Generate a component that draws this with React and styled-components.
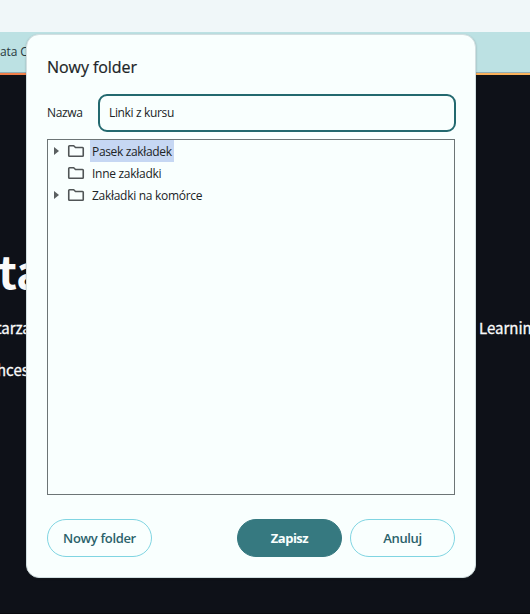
import React from "react";
import styled, { createGlobalStyle } from "styled-components";

const GlobalStyle = createGlobalStyle`
  *, *::before, *::after { box-sizing: border-box; }
  body { margin: 0; overflow: hidden; background: #0e1118; }
`;

const uiFont = `"Open Sans", "Noto Sans", sans-serif`;

const Window = styled.div`
  position: relative;
  display: flex;
  flex-direction: column;
  width: 530px;
  height: 614px;
  overflow: hidden;
  font-family: ${uiFont};
`;

const Toolbar = styled.div`
  flex: 0 0 32px;
  background: #f0f7f9;
`;

const BookmarksBar = styled.div`
  flex: 0 0 41px;
  display: flex;
  align-items: center;
  padding-bottom: 2px;
  background: #bce1e3;
  border-bottom: 1px solid #91aeb5;
  color: #29393e;
  font-size: 12px;
  letter-spacing: -0.1px;
`;

const AccentLine = styled.div`
  flex: 0 0 2px;
  background: linear-gradient(90deg, #f17d48, #fbb45c);
`;

const Page = styled.main`
  flex: 1;
  display: flex;
  flex-direction: column;
  padding-top: 167px;
  background: #0e1118;
  border-bottom: 1px solid #08090e;
  color: #fafafa;
  font-family: "Noto Sans CJK SC", "Noto Sans", sans-serif;
`;

const PageHeading = styled.div`
  height: 60px;
  margin-left: -2px;
  font-size: 45px;
  line-height: 56px;
  font-weight: 700;
`;

const PageLine = styled.div`
  display: flex;
  height: 42px;
  margin-left: ${(p) => p.$shift}px;
  font-size: 15px;
  line-height: 51px;
  white-space: nowrap;
  -webkit-text-stroke: 0.3px currentColor;
`;

const LineEnd = styled.span`
  width: 51px;
  margin-left: auto;
`;

const Dialog = styled.section`
  position: absolute;
  left: 26px;
  top: 34px;
  width: 450px;
  height: 544px;
  display: flex;
  flex-direction: column;
  padding: 20px;
  border: 1px solid #d2dfe1;
  border-radius: 13px;
  background: #f9fffe;
  box-shadow: 0 1px 2px rgba(35, 40, 40, 0.35);
  color: #202426;
`;

const Title = styled.h1`
  margin: 0;
  height: 24px;
  font-size: 16px;
  line-height: 24px;
  font-weight: 500;
  letter-spacing: -0.06px;
  -webkit-text-stroke: 0.2px currentColor;
`;

const Field = styled.label`
  display: flex;
  align-items: center;
  width: 409px;
  height: 38px;
  margin-top: 15px;
  font-size: 12px;
`;

const FieldName = styled.span`
  width: 51px;
  padding-bottom: 1px;
  letter-spacing: -0.35px;
`;

const TextInput = styled.input`
  flex: 1;
  min-width: 0;
  height: 38px;
  padding: 0 9px 1px;
  border: 2px solid #23696f;
  border-radius: 9px;
  outline: 0;
  background: #f9fffe;
  color: #202426;
  font: 12px ${uiFont};
  letter-spacing: -0.35px;
`;

const Tree = styled.ul`
  width: 408px;
  height: 356px;
  margin: 7px 0 0;
  padding: 0;
  border: 1px solid #6d7576;
  list-style: none;
`;

const TreeRow = styled.li`
  display: flex;
  align-items: center;
  height: 22px;
  padding-left: 5px;
`;

const ArrowSlot = styled.span`
  display: flex;
  width: 14px;
`;

const RowText = styled.span`
  height: 22px;
  margin-left: 5px;
  padding: 0 2px;
  line-height: 23px;
  font-size: 12px;
  letter-spacing: ${(p) => p.$tracking}px;
  background: ${(p) => (p.$selected ? "#c6d7f3" : "transparent")};
  white-space: nowrap;
`;

const Actions = styled.div`
  display: flex;
  gap: 8px;
  width: 408px;
  margin-top: 24px;
`;

const Button = styled.button`
  width: 105px;
  height: 38px;
  padding: 0;
  border: 1px solid ${(p) => (p.$primary ? "#367980" : "#80d5e2")};
  border-radius: 19px;
  background: ${(p) => (p.$primary ? "#367980" : "#f9fffe")};
  color: ${(p) => (p.$primary ? "#fafffe" : "#2b626b")};
  font: ${(p) => (p.$primary ? 700 : 600)} 13px ${uiFont};
  letter-spacing: ${(p) => (p.$primary ? -0.5 : -0.34)}px;

  &:first-child { margin-right: auto; }
`;

const Arrow = () => (
  <svg width="7" height="10" viewBox="0 0 7 10">
    <path d="M1 1L6 5L1 9Z" fill="#5b6061" />
  </svg>
);

const Folder = () => (
  <svg width="18" height="14" viewBox="0 0 18 14">
    <path
      d="M1.75 2.5Q1.75 1.75 2.5 1.75H6.7L8.5 3.5H15.5Q16.25 3.5 16.25 4.25V11.5Q16.25 12.25 15.5 12.25H2.5Q1.75 12.25 1.75 11.5Z"
      fill="none"
      stroke="#505556"
      strokeWidth="1.6"
      strokeLinejoin="round"
    />
  </svg>
);

const folders = [
  { name: "Pasek zakładek", nested: true, selected: true, tracking: -0.34 },
  { name: "Inne zakładki", tracking: -0.28 },
  { name: "Zakładki na komórce", nested: true, tracking: -0.29 },
];

export default function App() {
  return (
    <Window>
      <GlobalStyle />
      <Toolbar />
      <BookmarksBar>ata C</BookmarksBar>
      <AccentLine />
      <Page>
        <PageHeading>ta</PageHeading>
        <PageLine $shift={-4}>
          tarza<LineEnd>Learnin</LineEnd>
        </PageLine>
        <PageLine $shift={-3}>hces</PageLine>
      </Page>
      <Dialog role="dialog" aria-label="Nowy folder">
        <Title>Nowy folder</Title>
        <Field>
          <FieldName>Nazwa</FieldName>
          <TextInput defaultValue="Linki z kursu" />
        </Field>
        <Tree>
          {folders.map((f) => (
            <TreeRow key={f.name}>
              <ArrowSlot>{f.nested && <Arrow />}</ArrowSlot>
              <Folder />
              <RowText $selected={f.selected} $tracking={f.tracking}>
                {f.name}
              </RowText>
            </TreeRow>
          ))}
        </Tree>
        <Actions>
          <Button>Nowy folder</Button>
          <Button $primary>Zapisz</Button>
          <Button>Anuluj</Button>
        </Actions>
      </Dialog>
    </Window>
  );
}
